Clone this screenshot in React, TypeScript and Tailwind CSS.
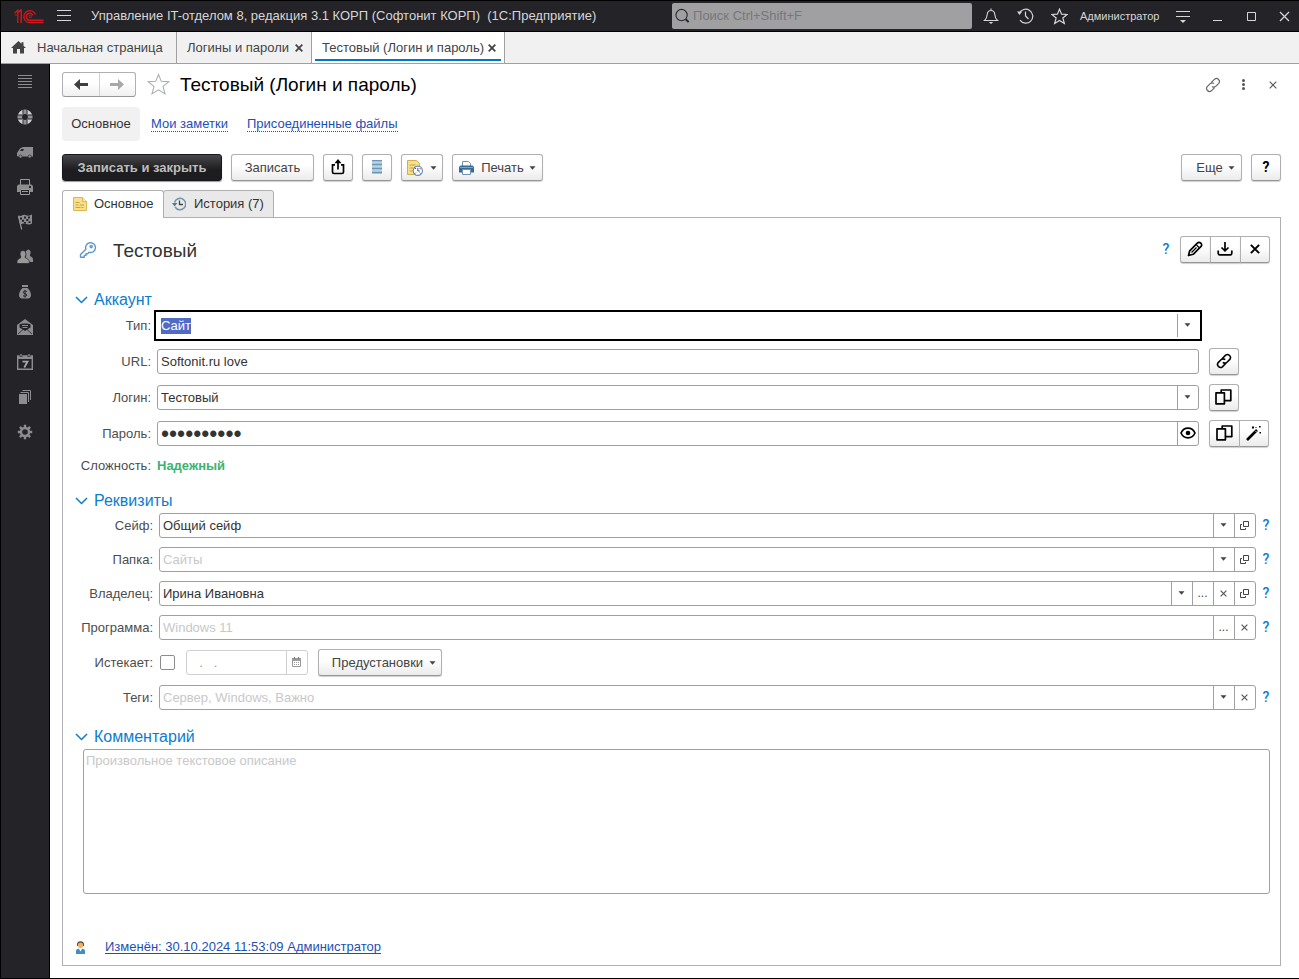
import { useEffect, useRef } from "react";
import type { ReactNode } from "react";
import clsx from "clsx";

const button =
  "flex h-[27px] shrink-0 items-center justify-center rounded-[3px] border border-[#b0b0b0] border-b-[#969696] bg-linear-to-b from-white from-40% to-[#ebebeb] text-[13px] text-[#444] shadow-[0_1px_1px_#d0d0d0]";

const iconButton = clsx(button, "pr-px pb-px");

const helpButton = "w-2 font-['Roboto',sans-serif] text-[14px] font-medium text-[#0b7dd1]";

function Caret() {
  return (
    <svg width="7" height="4" viewBox="0 0 7 4" className="shrink-0">
      <path d="M0.5 0.3h6L3.5 3.7z" fill="#444" />
    </svg>
  );
}

function Cross({ size = 8, width = 1.2, color = "#555" }) {
  return (
    <svg width={size} height={size} viewBox="0 0 8 8" className="shrink-0">
      <path d="M0.7 0.7l6.6 6.6M7.3 0.7L0.7 7.3" stroke={color} strokeWidth={width} fill="none" />
    </svg>
  );
}

function OpenIcon() {
  return (
    <svg width="9" height="9" viewBox="0 0 9 9" fill="none" stroke="#444">
      <path d="M3.5 0.5h5v5h-5z" />
      <path d="M2 3.5H0.5v5h5V7" />
    </svg>
  );
}

function LinkIcon({ color, width }: { color: string; width: number }) {
  return (
    <svg width="16" height="16" viewBox="0 0 16 16" fill="none" stroke={color} strokeWidth={width} strokeLinecap="round">
      <path d="M6.6 5.2l3-3a3 3 0 0 1 4.2 4.2l-2.8 2.8a3 3 0 0 1-3.6.5" />
      <path d="M9.4 10.8l-3 3a3 3 0 0 1-4.2-4.2L5 6.8a3 3 0 0 1 3.6-.5" />
    </svg>
  );
}

function CopyIcon() {
  return (
    <svg width="17" height="16" viewBox="0 0 17 16" fill="none" stroke="#000" strokeWidth="1.7" strokeLinejoin="round">
      <path d="M1 3.8h8.4v11H1z" />
      <path d="M6.2 3.5V1h9.6v10.6H9.8" />
    </svg>
  );
}

function NoteIcon() {
  return (
    <svg width="14" height="14" viewBox="0 0 14 14">
      <path d="M0.5 0.5h9l4 4v9h-13z" fill="#f7df8e" stroke="#dcb84e" />
      <path d="M9.5 0.5v4h4" fill="#fbeebd" stroke="#dcb84e" />
      <path d="M2.5 5.5h4M2.5 8h3M6.5 8h4.5M2.5 10.5h5M8.5 10.5h2" stroke="#c9a23c" />
    </svg>
  );
}

function StarIcon({ size, color }: { size: number; color: string }) {
  return (
    <svg width={size} height={size} viewBox="0 0 24 24" fill="none" stroke={color} strokeWidth={size > 20 ? 1.1 : 1.7}>
      <path d="M12 1.6l2.9 7.1 7.9.4-6.1 4.9 2.1 7.8L12 17.5l-6.8 4.3 2.1-7.8L1.2 9.1l7.9-.4z" />
    </svg>
  );
}

const sideIcons: { name: string; icon: ReactNode }[] = [
  {
    name: "Меню функций",
    icon: <path d="M1 1.5h14M1 4.5h14M1 7.5h14M1 10.5h14M1 13.5h14" stroke="#8d8d8f" />,
  },
  {
    name: "Поддержка",
    icon: (
      <>
        <circle cx="8" cy="8" r="5.2" fill="none" stroke="#d0d0d0" strokeWidth="4.6" />
        <path d="M8 0v5.5M8 10.5V16M0 8h5.5M10.5 8H16" stroke="#242328" strokeWidth="5" />
        <path d="M8 0.5v4.5M8 11v4.5M0.5 8H5M11 8h4.5" stroke="#929292" strokeWidth="3.2" />
      </>
    ),
  },
  {
    name: "Поставки",
    icon: (
      <>
        <path d="M0 9l3-4.5L6 3h10v9.5H1L0 12z" fill="#8d8d8f" />
        <path d="M3 7l1.5-2H7l-1 2z" fill="#242328" />
        <circle cx="3.5" cy="12.5" r="1.6" fill="#8d8d8f" stroke="#242328" strokeWidth="0.6" />
        <circle cx="12.8" cy="12.5" r="1.6" fill="#8d8d8f" stroke="#242328" strokeWidth="0.6" />
      </>
    ),
  },
  {
    name: "Печать",
    icon: (
      <>
        <path d="M3.5 6V0.5h9V6" fill="none" stroke="#9a9a9a" />
        <path d="M1.5 5.5h13L16 7v6h-3v-3H3v3H0V7z" fill="#8d8d8f" />
        <path d="M3.5 10.5h9v5h-9zM5 12.5h6" fill="none" stroke="#9a9a9a" />
        <path d="M12 7h2v2h-2z" fill="#242328" />
      </>
    ),
  },
  {
    name: "Проекты",
    icon: (
      <>
        <path d="M1.5 2l3.2 13.5" stroke="#9a9a9a" strokeWidth="1.2" />
        <path d="M1.3 1.5c4 1.5 4-1.5 7-.5s3 1 6.7-.5v9c-3 1.5-4 1-6.5.3s-3 .8-5.5.4z" fill="#8d8d8f" />
        <path d="M3 3.5h2v2H3zM7 2.5h2v2H7zM11 2.5h2v2h-2zM5 5.7h2v2H5zM9.3 5h2v2h-2zM7 8h2v1.5H7zM11.5 7.3h2v1.8h-2z" fill="#242328" />
      </>
    ),
  },
  {
    name: "Сотрудники",
    icon: (
      <>
        <path d="M11 0.5a2.8 3.2 0 0 1 2.6 3.3c0 1.3-.7 2-.7 2.8 0 1.2 3.1 1 3.1 4V13h-5L9 9V2z" fill="#8d8d8f" />
        <path
          d="M6 1.5a3 3.4 0 0 1 3 3.6c0 1.4-.9 2.1-.9 3 0 1.5 4.2 1.3 4.2 5v1.4H0v-1.4c0-3.7 3.9-3.5 3.9-5 0-.9-.9-1.6-.9-3a3 3.4 0 0 1 3-3.6z"
          fill="#999"
          stroke="#242328"
          strokeWidth="0.7"
        />
      </>
    ),
  },
  {
    name: "Финансы",
    icon: (
      <>
        <path d="M5 1h6v2H5zM5.5 4h5c2 2 3.500 4.500 3.500 7S12.500 14.500 11 14.500H5c-1.500 0-3-1-3-3.500s1.500-5 3.500-7z" fill="#8d8d8f" />
        <path d="M9.800 7.500c-1.500-1-3.500-.5-3.500.8 0 1.900 3.500 1 3.500 2.800 0 1.300-2.300 1.700-3.800.6M8 6v7.500" fill="none" stroke="#242328" />
      </>
    ),
  },
  {
    name: "Почта",
    icon: (
      <>
        <path d="M0 6l8-6 8 6v10H0z" fill="#8d8d8f" />
        <path d="M2.5 5.5c2-1.2 9-1.2 11 0v3L8 12 2.5 8.500z" fill="#242328" />
        <path d="M5 6.500h6M5.500 8.500h5" stroke="#8d8d8f" />
        <path d="M1 15l5-4.500M15 15l-5-4.500" stroke="#242328" strokeWidth="0.8" />
      </>
    ),
  },
  {
    name: "Календарь",
    icon: (
      <>
        <path d="M0.7 2.2h14.600v13H0.700z" fill="none" stroke="#8d8d8f" strokeWidth="1.4" />
        <path d="M0 1.500h16V5H0z" fill="#8d8d8f" />
        <path d="M4 0v3M12 0v3" stroke="#242328" strokeWidth="2.6" />
        <path d="M4 0v2.500M12 0v2.500" stroke="#9a9a9a" strokeWidth="1.2" />
        <path d="M5.500 7.700h5L7.300 13.500" fill="none" stroke="#a5a5a5" strokeWidth="1.8" />
      </>
    ),
  },
  {
    name: "Документы",
    icon: (
      <>
        <path d="M2 5h8v10H2z" fill="#8d8d8f" />
        <path d="M3.500 3.500h8V13M5.500 1.500h8V11" fill="none" stroke="#8d8d8f" />
      </>
    ),
  },
  {
    name: "Настройки",
    icon: (
      <>
        <circle cx="8" cy="8" r="4" fill="none" stroke="#8d8d8f" strokeWidth="2.4" />
        <path
          d="M8 0.800v3M8 12.200v3M0.800 8h3M12.200 8h3M2.900 2.900l2 2M11.100 11.100l2 2M2.900 13.100l2-2M11.100 4.900l2-2"
          stroke="#8d8d8f"
          strokeWidth="2.4"
        />
      </>
    ),
  },
];

function TitleBar() {
  return (
    <header className="flex h-[31px] items-center border-b border-black bg-[#242328] text-[#d6d6d6]">
      <svg width="30" height="15" viewBox="0 0 30 15" fill="none" stroke="#d4161c" className="ml-[13px] shrink-0">
        <path d="M0.500 4.200L3.800 1.200v12.800" strokeWidth="1.3" />
        <path d="M4 3.500L6.800 1h0.400v13" strokeWidth="1.5" />
        <path d="M1 6h2" />
        <path d="M21.500 5.500A6 6 0 1 0 16.500 13.600H29.500" strokeWidth="1.4" />
        <path d="M19 6.300A3.500 3.500 0 1 0 16.500 11.200H29.500" strokeWidth="1.4" />
        <circle cx="16.300" cy="7.500" r="1.3" />
      </svg>
      <button aria-label="Главное меню" className="ml-[13px] shrink-0">
        <svg width="14" height="12" viewBox="0 0 14 12" stroke="#d6d6d6">
          <path d="M0 0.500h14M0 5.500h14M0 10.500h14" />
        </svg>
      </button>
      <span className="ml-5 flex-1 truncate text-[13px] whitespace-pre">
        Управление IT-отделом 8, редакция 3.1 КОРП (Софтонит КОРП){"  "}(1С:Предприятие)
      </span>
      <label className="flex h-[26px] w-[300px] shrink-0 items-center rounded-[2px] bg-[#a0a0a2] pl-[3px]">
        <svg width="16" height="16" viewBox="0 0 16 16" fill="none" stroke="#2b2b2e">
          <circle cx="7" cy="7" r="6" strokeWidth="1.2" />
          <path d="M11.500 11.500l3 3" strokeWidth="2.2" />
        </svg>
        <input
          type="search"
          aria-label="Поиск"
          placeholder="Поиск Ctrl+Shift+F"
          className="ml-[3px] w-full text-[13px] text-[#222] outline-none placeholder:text-[#77777a]"
        />
      </label>
      <div className="flex shrink-0 items-center pl-[2px]">
        <button aria-label="Уведомления" className="flex w-[34px] justify-center">
          <svg width="16" height="16" viewBox="0 0 16 16" fill="none" stroke="#d6d6d6" strokeWidth="1.1">
            <path d="M1.500 12.500h13c-2-1.700-2.500-3-2.700-6C11.600 4 10.300 2.500 8 2.500S4.400 4 4.200 6.500c-.2 3-.7 4.300-2.700 6zM8 0.500v2" />
            <path d="M5.800 14h4.400L8 16z" fill="#d6d6d6" stroke="none" />
          </svg>
        </button>
        <button aria-label="История" className="flex w-[34px] justify-center">
          <svg width="17" height="16" viewBox="0 0 17 16" fill="none" stroke="#d6d6d6" strokeWidth="1.2">
            <path d="M2.300 5.500A7 7 0 1 1 3 12.200" />
            <path d="M8.500 3.500V8l3 3" />
            <path d="M0 3.500h5.200L2.500 7z" fill="#d6d6d6" stroke="none" />
          </svg>
        </button>
        <button aria-label="Избранное" className="flex w-[34px] justify-center">
          <StarIcon size={17} color="#d6d6d6" />
        </button>
        <button className="ml-1 w-[84px] text-left text-[11px]">Администратор</button>
        <button aria-label="Сервис" className="ml-[2px] flex w-[34px] justify-center">
          <svg width="14" height="13" viewBox="0 0 14 13" stroke="#d6d6d6">
            <path d="M0 1.500h14M0 6.500h14" />
            <path d="M4 10h6l-3 3z" fill="#d6d6d6" stroke="none" />
          </svg>
        </button>
        <button aria-label="Свернуть" className="flex w-[34px] justify-center">
          <svg width="9" height="9" viewBox="0 0 9 9" stroke="#d6d6d6">
            <path d="M0 8.500h9" />
          </svg>
        </button>
        <button aria-label="Развернуть" className="flex w-[34px] justify-center">
          <svg width="9" height="9" viewBox="0 0 9 9" fill="none" stroke="#d6d6d6">
            <path d="M0.500 0.500h8v8h-8z" />
          </svg>
        </button>
        <button aria-label="Закрыть окно" className="flex w-[31px] justify-center pl-[2px]">
          <Cross size={11} width={0.9} color="#d6d6d6" />
        </button>
      </div>
    </header>
  );
}

function WindowTabs() {
  return (
    <nav className="flex h-8 border-b border-[#a0a0a0] bg-[#f1f1f1] text-[13px] text-[#444]">
      <button className="flex w-[176px] items-center border-r border-[#a0a0a0] pl-[10px] whitespace-nowrap">
        <svg width="15" height="13" viewBox="0 0 15 13" fill="#444">
          <path d="M7.500 0L10.500 2.800V1.200h2v3.500L15 7h-2v5.500H9V8H6v4.500H2V7H0z" />
        </svg>
        <span className="ml-[11px]">Начальная страница</span>
      </button>
      <div className="flex w-[135px] items-center justify-between border-r border-[#a0a0a0] pr-2 pl-[10px] whitespace-nowrap">
        <button>Логины и пароли</button>
        <button aria-label="Закрыть вкладку">
          <Cross width={1.8} color="#444" />
        </button>
      </div>
      <div className="flex w-[193px] flex-col border-r border-[#a0a0a0] bg-white px-[3px]">
        <div className="flex h-[29px] items-center justify-between border-b-2 border-[#0077cc] pt-[5px] pr-[5px] pl-[7px] whitespace-nowrap">
          <button>Тестовый (Логин и пароль)</button>
          <button aria-label="Закрыть вкладку">
            <Cross width={1.8} color="#444" />
          </button>
        </div>
      </div>
    </nav>
  );
}

function Sidebar() {
  return (
    <aside className="flex w-[49px] shrink-0 flex-col items-center gap-[19px] border-r border-black bg-[#242328] pt-[10px]">
      {sideIcons.map((item) => (
        <button key={item.name} aria-label={item.name}>
          <svg width="16" height="16" viewBox="0 0 16 16">
            {item.icon}
          </svg>
        </button>
      ))}
    </aside>
  );
}

function FormHeader() {
  return (
    <div className="mr-[11px] flex h-[25px] items-center">
      <div className="flex h-[25px] w-[74px] shrink-0 rounded-[3px] border border-[#b0b0b0] border-b-[#969696] bg-linear-to-b from-white from-40% to-[#f0f0f0]">
        <button aria-label="Назад" className="flex flex-1 items-center justify-center border-r border-[#d0d0d0]">
          <svg width="14" height="11" viewBox="0 0 14 11" fill="#3f3f3f">
            <path d="M0 5.500L6 0v4h8v3H6v4z" />
          </svg>
        </button>
        <button aria-label="Вперед" className="flex flex-1 items-center justify-center">
          <svg width="14" height="11" viewBox="0 0 14 11" fill="#a8a8a8">
            <path d="M14 5.500L8 0v4H0v3h8v4z" />
          </svg>
        </button>
      </div>
      <button aria-label="В избранное" className="ml-[11px] shrink-0">
        <StarIcon size={23} color="#a9adb3" />
      </button>
      <h1 className="ml-[10px] flex-1 text-[19px] leading-6 text-black">Тестовый (Логин и пароль)</h1>
      <button aria-label="Получить ссылку" className="flex w-[30px] justify-center">
        <LinkIcon color="#666" width={1.2} />
      </button>
      <button aria-label="Дополнительно" className="flex w-[30px] justify-center">
        <svg width="3" height="11" viewBox="0 0 3 11" fill="#555">
          <circle cx="1.5" cy="1.5" r="1.5" />
          <circle cx="1.5" cy="5.5" r="1.5" />
          <circle cx="1.5" cy="9.5" r="1.5" />
        </svg>
      </button>
      <button aria-label="Закрыть форму" className="flex w-[30px] justify-center">
        <Cross width={1.1} />
      </button>
    </div>
  );
}

function NavLinks() {
  const link = "mt-px border-b border-dotted border-[#1d4fb4] leading-[14px] text-[#1d4fb4]";
  return (
    <nav className="mt-[10px] flex h-[34px] items-center text-[13px]">
      <button className="h-full w-[78px] rounded-[4px] bg-[#f1f1f1] text-[#333]">Основное</button>
      <a href="#notes" className={clsx(link, "ml-[11px]")}>
        Мои заметки
      </a>
      <a href="#files" className={clsx(link, "ml-[19px]")}>
        Присоединенные файлы
      </a>
    </nav>
  );
}

function CommandBar() {
  return (
    <div className="mt-[13px] mr-[18px] flex items-center">
      <button className="h-[27px] w-[160px] rounded-[3px] border border-[#18181a] bg-linear-to-b from-[#48484b] to-[#1d1d1f] to-60% text-[13px] font-bold whitespace-nowrap text-[#bdbdbd] shadow-[0_1px_1px_#999]">
        Записать и закрыть
      </button>
      <button className={clsx(button, "ml-[9px] w-[83px]")}>Записать</button>
      <button aria-label="Поделиться" className={clsx(iconButton, "ml-[9px] w-[30px]")}>
        <svg width="14" height="16" viewBox="0 0 14 16" fill="none" stroke="#000" strokeWidth="1.7">
          <path d="M4 5.800H1.500v7.200q0 1.500 1.500 1.500h8q1.500 0 1.500-1.500V5.800H10M7 10.500V2" />
          <path d="M3.500 4.300L7 0l3.500 4.300z" fill="#000" stroke="none" />
        </svg>
      </button>
      <button aria-label="Список" className={clsx(iconButton, "ml-[9px] w-[30px]")}>
        <svg width="10" height="14" viewBox="0 0 10 14">
          <path d="M0 0h10v14H0z" fill="#a3c3d9" />
          <path d="M0 0.500h10M0 4.500h10M0 8.500h10M0 12.500h10" stroke="#6c98b6" />
          <path d="M0 2.500h10M0 6.500h10M0 10.500h10" stroke="#b8d3e4" />
        </svg>
      </button>
      <button aria-label="Напоминание" className={clsx(button, "ml-[9px] w-[42px] gap-[7px]")}>
        <svg width="16" height="16" viewBox="0 0 16 16">
          <path d="M0.500 0.500h9l3 3v11h-12z" fill="#f7df8e" stroke="#d3ad48" />
          <path d="M2.500 5h6M2.500 8h4M2.500 11h3" stroke="#c9a23c" />
          <circle cx="10.800" cy="10.800" r="4.600" fill="#fff" stroke="#5b8fc0" strokeWidth="1.2" />
          <path d="M10.800 8v3h2" fill="none" stroke="#2d5f8f" />
          <path d="M8 8l1 1M13.600 8l-1 1M8 13.600l1-1M13.600 13.600l-1-1" stroke="#d22" />
        </svg>
        <Caret />
      </button>
      <button className={clsx(button, "ml-[9px] w-[91px]")}>
        <svg width="15" height="14" viewBox="0 0 15 14">
          <path d="M3.500 5V0.500h6l2 2V5" fill="#fff" stroke="#6b93b3" />
          <path d="M1.500 4.500h12L15 6v5.500H0V6z" fill="#3c6a92" />
          <path d="M3.500 8.500h8v5h-8z" fill="#fff" stroke="#6b93b3" />
          <path d="M1 6.500h13" stroke="#7fa5c4" />
        </svg>
        <span className="mr-[5px] ml-[7px]">Печать</span>
        <Caret />
      </button>
      <button className={clsx(button, "ml-auto w-[61px] gap-[5px] pl-2")}>
        Еще
        <Caret />
      </button>
      <button
        aria-label="Справка"
        className={clsx(button, "ml-[9px] w-[30px] font-['Roboto',sans-serif] font-bold")}
      >
        <span className="text-[14px] text-black">?</span>
      </button>
    </div>
  );
}

function PageTabs() {
  return (
    <div className="relative -mb-px mt-[9px] flex h-7 text-[13px] text-[#333]">
      <button className="flex w-[102px] items-center rounded-t-[3px] border border-b-0 border-[#b0b0b0] bg-white pb-[2px] pl-[10px]">
        <NoteIcon />
        <span className="ml-[7px]">Основное</span>
      </button>
      <button className="-ml-px flex w-[111px] items-center rounded-t-[3px] border border-[#b0b0b0] bg-[#e9e9e9] pb-px pl-2 whitespace-nowrap">
        <svg width="14" height="14" viewBox="0 0 14 14" fill="none">
          <path d="M2.500 5.500a5.700 5.700 0 1 1 .6 4.500" stroke="#6d95ae" strokeWidth="1.5" />
          <path d="M0 6h5.500L2.500 9.500z" fill="#4d7c9a" />
          <path d="M7.500 3.500v4h3.500" stroke="#444" strokeWidth="1.3" />
        </svg>
        <span className="ml-2">История (7)</span>
      </button>
    </div>
  );
}

function SectionTitle({ children, className }: { children: string; className: string }) {
  return (
    <h2 className={clsx("flex h-5 text-[16px] text-[#0b7dd1]", className)}>
      <button className="flex items-center">
        <svg width="13" height="8" viewBox="0 0 13 8" fill="none" stroke="#0b7dd1" strokeWidth="1.5">
          <path d="M1 1l5.500 5.500L12 1" />
        </svg>
        <span className="ml-[6px] leading-5">{children}</span>
      </button>
    </h2>
  );
}

type Action = "list" | "dots" | "clear" | "open" | "show";

const actions: Record<Action, { label: string; icon: ReactNode }> = {
  list: { label: "Выбрать из списка", icon: <Caret /> },
  dots: { label: "Показать все", icon: <span className="text-[12px]">...</span> },
  clear: { label: "Очистить", icon: <Cross size={7} width={1.3} /> },
  open: { label: "Открыть", icon: <OpenIcon /> },
  show: {
    label: "Показать пароль",
    icon: (
      <svg width="16" height="12" viewBox="0 0 16 12" fill="none" stroke="#000" strokeWidth="1.7" className="shrink-0">
        <path d="M1 6c3-6.400 11-6.400 14 0-3 6.400-11 6.400-14 0z" />
        <circle cx="8" cy="6" r="2.3" fill="#000" stroke="none" />
      </svg>
    ),
  },
};

interface FieldBoxProps {
  id: string;
  value?: string;
  placeholder?: string;
  type?: string;
  buttons?: Action[];
  focused?: boolean;
}

function FieldBox({ id, value, placeholder, type = "text", buttons = [], focused }: FieldBoxProps) {
  const ref = useRef<HTMLInputElement>(null);

  useEffect(() => {
    if (focused) {
      ref.current?.focus();
      ref.current?.select();
    }
  }, [focused]);

  return (
    <div
      className={clsx(
        "flex h-[25px] min-w-0 flex-1 border bg-white",
        focused ? "border-transparent outline-2 outline-offset-1 outline-black" : "rounded-[3px] border-[#a0a0a0]",
      )}
    >
      <input
        ref={ref}
        id={id}
        type={type}
        defaultValue={value}
        placeholder={placeholder}
        className={clsx(
          "min-w-0 flex-1 pl-[3px] text-[#333] outline-none selection:bg-[#4f6bc6] selection:text-white placeholder:text-[#c8c8c8]",
          type === "password" ? "pt-px text-[23px] leading-[22px]" : "text-[13px] leading-4",
        )}
      />
      {buttons.map((name) => (
        <button
          key={name}
          aria-label={actions[name].label}
          className="flex w-[21px] shrink-0 items-center justify-center border-l border-[#a0a0a0] pr-px pb-px text-[#444]"
        >
          {actions[name].icon}
        </button>
      ))}
    </div>
  );
}

function AccountRow({ label, children, ...box }: FieldBoxProps & { label: string; children?: ReactNode }) {
  return (
    <div className="flex h-[27px] items-center">
      <label htmlFor={box.id} className="mr-[6px] w-[76px] text-right">
        {label}:
      </label>
      <FieldBox {...box} />
      <div className="ml-[10px] flex w-[61px]">{children}</div>
    </div>
  );
}

function DetailRow({ label, ...box }: FieldBoxProps & { label: string }) {
  return (
    <div className="flex h-[25px] items-center">
      <label htmlFor={box.id} className="mr-[6px] w-[78px] text-right">
        {label}:
      </label>
      <FieldBox {...box} />
      <button aria-label={`Справка: ${label}`} className={clsx(helpButton, "ml-[6px]")}>
        ?
      </button>
    </div>
  );
}

function Card() {
  return (
    <section className="mr-[18px] flex flex-1 flex-col border border-[#b0b0b0] pt-[18px] pr-[10px] pb-2 pl-3 text-[13px] text-[#4d4d4d]">
      <div className="flex h-[27px] items-center">
        <svg width="18" height="18" viewBox="0 0 18 18" fill="none" stroke="#5f97cf" strokeWidth="1.4" className="ml-[4px]">
          <path d="M6.900 8.300A4.900 4.900 0 1 1 10 11.300L8.600 12.700H7v1.700H5.300v1.800H1.500v-2.600z" strokeLinejoin="round" />
          <circle cx="12.200" cy="5.600" r="1.1" />
        </svg>
        <span className="ml-4 flex-1 pt-[3px] text-[19px] leading-6 text-[#333]">Тестовый</span>
        <button aria-label="Справка по карточке" className={clsx(helpButton, "mr-[10px]")}>
          ?
        </button>
        <button aria-label="Изменить" className={clsx(iconButton, "w-[31px] rounded-r-none")}>
          <svg width="16" height="16" viewBox="0 0 16 16" fill="none" stroke="#000" strokeWidth="1.7" strokeLinejoin="round">
            <path d="M1.500 14.500l1.200-4.700 7.600-7.600q1.700-1.700 3.500 0t0 3.500l-7.600 7.600z" />
            <path d="M9.500 4l2.500 2.500M4.500 11.500l5-5" strokeWidth="1.2" />
          </svg>
        </button>
        <button aria-label="Сохранить" className={clsx(iconButton, "-ml-px w-[31px] rounded-none")}>
          <svg width="16" height="14" viewBox="0 0 16 14" fill="none" stroke="#000" strokeWidth="1.7">
            <path d="M1.200 8.500v2.800q0 1.500 1.500 1.500h10.600q1.500 0 1.500-1.500V8.500M8 0v8M4.500 5.500L8 8.800l3.500-3.300" />
          </svg>
        </button>
        <button aria-label="Удалить" className={clsx(iconButton, "-ml-px w-[30px] rounded-l-none")}>
          <Cross size={10} width={1.6} color="#000" />
        </button>
      </div>

      <SectionTitle className="mt-[27px]">Аккаунт</SectionTitle>
      <div className="mt-[2px] flex flex-col gap-[9px]">
        <AccountRow id="type" label="Тип" value="Сайт" buttons={["list"]} focused />
        <AccountRow id="url" label="URL" value="Softonit.ru love">
          <button aria-label="Перейти по ссылке" className={clsx(iconButton, "w-[30px]")}>
            <LinkIcon color="#000" width={1.6} />
          </button>
        </AccountRow>
        <AccountRow id="login" label="Логин" value="Тестовый" buttons={["list"]}>
          <button aria-label="Скопировать логин" className={clsx(iconButton, "w-[30px]")}>
            <CopyIcon />
          </button>
        </AccountRow>
        <AccountRow id="password" label="Пароль" type="password" value="softonit24" buttons={["show"]}>
          <button aria-label="Скопировать пароль" className={clsx(iconButton, "w-[31px] rounded-r-none")}>
            <CopyIcon />
          </button>
          <button aria-label="Сгенерировать пароль" className={clsx(iconButton, "-ml-px w-[30px] rounded-l-none")}>
            <svg width="16" height="16" viewBox="0 0 16 16" stroke="#000">
              <path d="M1 15L11 5" strokeWidth="2.6" />
              <path d="M9.200 5.700l1.300 1.300" stroke="#fff" strokeWidth="0.8" />
              <path d="M6 1.500h2v2H6zM13 1h1.600v1.600H13zM13.500 7h1.500v1.500h-1.500zM9.500 2h1v1h-1z" fill="#000" stroke="none" />
            </svg>
          </button>
        </AccountRow>
      </div>
      <div className="mt-[9px] flex h-5 items-center">
        <span className="mr-[6px] w-[76px] text-right">Сложность:</span>
        <span className="font-bold text-[#3cb371]">Надежный</span>
      </div>

      <SectionTitle className="mt-[15px]">Реквизиты</SectionTitle>
      <div className="mt-[2px] flex flex-col gap-[9px]">
        <DetailRow id="safe" label="Сейф" value="Общий сейф" buttons={["list", "open"]} />
        <DetailRow id="folder" label="Папка" placeholder="Сайты" buttons={["list", "open"]} />
        <DetailRow id="owner" label="Владелец" value="Ирина Ивановна" buttons={["list", "dots", "clear", "open"]} />
        <DetailRow id="program" label="Программа" placeholder="Windows 11" buttons={["dots", "clear"]} />
        <div className="flex h-[27px] items-center">
          <label htmlFor="expires" className="mr-[7px] w-[78px] text-right">
            Истекает:
          </label>
          <input
            id="expires"
            type="checkbox"
            className="size-[15px] appearance-none rounded-[2px] border border-[#8c8c8c] bg-white checked:bg-[#0b7dd1]"
          />
          <div className="ml-[11px] flex h-[25px] w-[122px] rounded-[3px] border border-[#d0d0d0]">
            <input
              aria-label="Дата истечения"
              disabled
              defaultValue="  .   ."
              className="min-w-0 flex-1 pl-[5px] text-[#999]"
            />
            <button
              disabled
              aria-label="Выбрать дату"
              className="flex w-[21px] items-center justify-center border-l border-[#d0d0d0] pr-px pb-[2px]"
            >
              <svg width="9" height="10" viewBox="0 0 9 10">
                <path d="M0.500 1.500h8v8h-8z" fill="#fff" stroke="#999" />
                <path d="M0 1h9v3H0z" fill="#999" />
                <path d="M2.500 0v2M6.500 0v2" stroke="#777" />
                <path d="M2 5.500h5M2 7.500h5" stroke="#999" strokeDasharray="1 1" />
              </svg>
            </button>
          </div>
          <button className={clsx(button, "ml-[10px] w-[124px] gap-[6px] pl-2")}>
            Предустановки
            <Caret />
          </button>
        </div>
        <DetailRow id="tags" label="Теги" placeholder="Сервер, Windows, Важно" buttons={["list", "clear"]} />
      </div>

      <SectionTitle className="mt-[17px]">Комментарий</SectionTitle>
      <textarea
        aria-label="Комментарий"
        placeholder="Произвольное текстовое описание"
        className="mt-[2px] ml-2 h-[145px] resize-none rounded-[3px] border border-[#a0a0a0] px-[2px] py-[3px] leading-4 text-[#333] outline-none placeholder:text-[#c8c8c8]"
      />

      <div className="mt-auto flex h-5 items-center">
        <svg width="11" height="13" viewBox="0 0 11 13">
          <path d="M2 3.500C2 -0.700 9 -0.700 9 3.500V5H2z" fill="#4a3a2a" />
          <circle cx="5.500" cy="4.300" r="2.7" fill="#f0b060" />
          <path d="M1 13V10q0-2 2-2.300h5q2 .3 2 2.300v3z" fill="#3f8fc6" />
          <path d="M3.800 7.500h3.400L5.500 10.500z" fill="#fff" />
        </svg>
        <a href="#history" className="ml-[19px] text-[#1d4fb4] underline underline-offset-2">
          Изменён: 30.10.2024 11:53:09 Администратор
        </a>
      </div>
    </section>
  );
}

export default function App() {
  return (
    <div className="flex min-h-screen flex-col border-y border-l border-black bg-white font-['Liberation_Sans',Arial,sans-serif]">
      <TitleBar />
      <WindowTabs />
      <div className="flex flex-1">
        <Sidebar />
        <main className="flex min-w-0 flex-1 flex-col pt-2 pb-3 pl-3">
          <FormHeader />
          <NavLinks />
          <CommandBar />
          <PageTabs />
          <Card />
        </main>
      </div>
    </div>
  );
}
